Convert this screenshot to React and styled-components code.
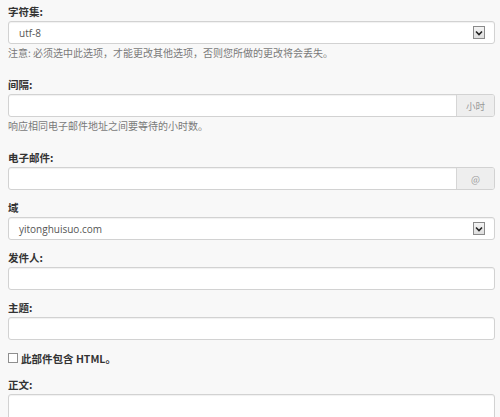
import React from "react";
import styled, { createGlobalStyle } from "styled-components";

const GlobalStyle = createGlobalStyle`
  html, body {
    margin: 0;
    padding: 0;
    background: #f8f8f8;
  }
  body {
    font-family: "Open Sans", "Noto Sans CJK SC", sans-serif;
  }
`;

const Page = styled.div`
  display: flex;
  flex-direction: column;
  padding: 5px 5px 0 8px;
  height: 417px;
  box-sizing: border-box;
  overflow: hidden;
`;

const Field = styled.div`
  display: flex;
  flex-direction: column;
  margin-bottom: 11px;
`;

const Label = styled.div`
  font-family: "Noto Sans CJK SC", "Open Sans", sans-serif;
  font-size: 10.5px;
  font-weight: 700;
  line-height: 14px;
  color: #333;
  margin-bottom: 2px;
`;

const Box = styled.div`
  display: flex;
  align-items: center;
  flex-shrink: 0;
  height: ${(p) => p.$h || 23}px;
  box-sizing: border-box;
  background: #fff;
  border: 1px solid #d2d2d2;
  border-radius: 3px;
  box-shadow: inset 0 1px 1px rgba(0, 0, 0, 0.06);
  overflow: hidden;
`;

const Value = styled.span`
  flex: 1;
  padding-left: 10px;
  font-family: "Open Sans", sans-serif;
  font-size: 10px;
  color: #555;
`;

const Addon = styled.span`
  width: 37px;
  align-self: stretch;
  display: flex;
  align-items: center;
  justify-content: center;
  background: #eeeeee;
  border-left: 1px solid #d6d6d6;
  font-family: "Noto Sans CJK SC", sans-serif;
  font-size: 9.5px;
  color: #999;
`;

const Arrow = styled.span`
  width: 12px;
  height: 13px;
  margin-right: 9px;
  box-sizing: border-box;
  border: 1px solid #8a8a8a;
  background: linear-gradient(#f4f4f4, #dedede);
  display: flex;
  align-items: center;
  justify-content: center;
`;

const Help = styled.div`
  font-family: "Noto Sans CJK SC", sans-serif;
  font-size: 10px;
  line-height: 14px;
  color: #7a7a7a;
  margin: 2px 0 7px;
`;

const CheckRow = styled.label`
  display: flex;
  align-items: center;
  gap: 3px;
  height: 14px;
  margin-bottom: 13px;
  font-family: "Noto Sans CJK SC", "Open Sans", sans-serif;
  font-size: 10.5px;
  font-weight: 700;
  color: #333;
`;

const CheckBox = styled.span`
  width: 10px;
  height: 10px;
  box-sizing: border-box;
  border: 1px solid #8f8f8f;
  background: #fff;
`;

const Chevron = () => (
  <svg width="8" height="6" viewBox="0 0 8 6">
    <path d="M1 1.5 L4 4.5 L7 1.5" fill="none" stroke="#222" strokeWidth="1.6" />
  </svg>
);

function SelectBox({ value }) {
  return (
    <Box>
      <Value>{value}</Value>
      <Arrow>
        <Chevron />
      </Arrow>
    </Box>
  );
}

export default function App() {
  return (
    <Page>
      <GlobalStyle />
      <Field>
        <Label>字符集:</Label>
        <SelectBox value="utf-8" />
        <Help>注意: 必须选中此选项，才能更改其他选项，否则您所做的更改将会丢失。</Help>
      </Field>

      <Field>
        <Label>间隔:</Label>
        <Box>
          <Value />
          <Addon>小时</Addon>
        </Box>
        <Help>响应相同电子邮件地址之间要等待的小时数。</Help>
      </Field>

      <Field>
        <Label>电子邮件:</Label>
        <Box>
          <Value />
          <Addon>@</Addon>
        </Box>
      </Field>

      <Field>
        <Label>域</Label>
        <SelectBox value="yitonghuisuo.com" />
      </Field>

      <Field>
        <Label>发件人:</Label>
        <Box />
      </Field>

      <Field>
        <Label>主题:</Label>
        <Box />
      </Field>

      <CheckRow>
        <CheckBox />
        此部件包含 HTML。
      </CheckRow>

      <Field>
        <Label>正文:</Label>
        <Box $h={60} />
      </Field>
    </Page>
  );
}
